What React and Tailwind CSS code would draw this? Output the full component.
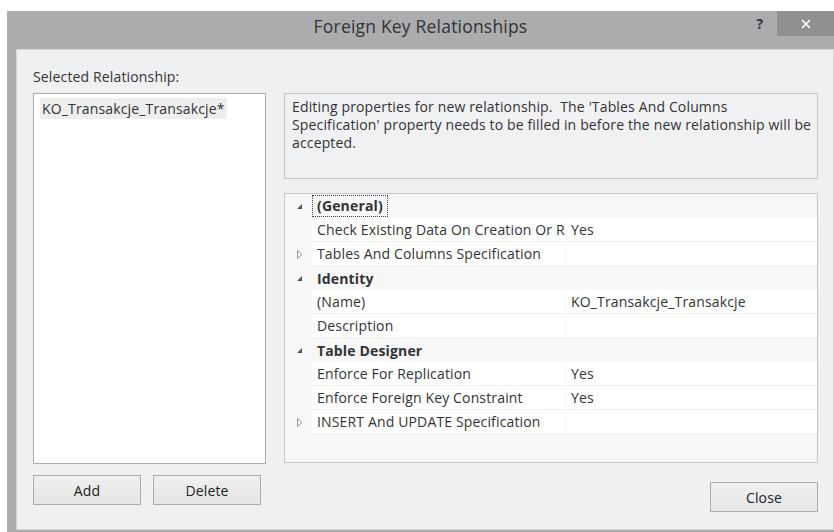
import React from 'react';

const rows = [
  { kind: 'cat', label: '(General)', focused: true },
  { kind: 'prop', label: 'Check Existing Data On Creation Or Re-Enabling', value: 'Yes' },
  { kind: 'prop', label: 'Tables And Columns Specification', value: '', collapsed: true },
  { kind: 'cat', label: 'Identity' },
  { kind: 'prop', label: '(Name)', value: 'KO_Transakcje_Transakcje' },
  { kind: 'prop', label: 'Description', value: '' },
  { kind: 'cat', label: 'Table Designer' },
  { kind: 'prop', label: 'Enforce For Replication', value: 'Yes' },
  { kind: 'prop', label: 'Enforce Foreign Key Constraint', value: 'Yes' },
  { kind: 'prop', label: 'INSERT And UPDATE Specification', value: '', collapsed: true },
];

function Expanded() {
  return (
    <svg width="7" height="7" viewBox="0 0 7 7">
      <path d="M6 1 L6 6 L1 6 Z" fill="#555" />
    </svg>
  );
}

function Collapsed() {
  return (
    <svg width="6" height="9" viewBox="0 0 6 9">
      <path d="M0.5 0.5 L5 4.5 L0.5 8.5 Z" fill="none" stroke="#9a9a9a" strokeWidth="1" />
    </svg>
  );
}

function PropertyRow({ row }) {
  if (row.kind === 'cat') {
    return (
      <div className="flex h-[24px] items-center">
        <div className="w-[27px] flex justify-center items-center pl-[2px]">
          <Expanded />
        </div>
        <div className="flex-1 h-full flex items-center">
          <span
            className={
              row.focused
                ? 'font-bold border border-dotted border-[#444] px-[4px] leading-[20px]'
                : 'font-bold pl-[5px]'
            }
          >
            {row.label}
          </span>
        </div>
      </div>
    );
  }
  return (
    <div className="flex h-[24px]">
      <div className="w-[27px] flex justify-center items-center pl-[2px]">
        {row.collapsed && <Collapsed />}
      </div>
      <div className="w-[253px] bg-white border-b border-[#f0f0f0] pl-[5px] flex items-center overflow-hidden whitespace-nowrap">
        {row.label}
      </div>
      <div className="w-px" />
      <div className="flex-1 bg-white border-b border-[#f0f0f0] pl-[5px] flex items-center whitespace-nowrap overflow-hidden">
        {row.value}
      </div>
    </div>
  );
}

function Button({ children, className = '' }) {
  return (
    <button
      className={
        'h-[30px] w-[108px] border border-[#acacac] bg-gradient-to-b from-[#f0f0f0] to-[#e5e5e5] text-[14px] text-[#222] ' +
        className
      }
    >
      {children}
    </button>
  );
}

export default function App() {
  return (
    <div className="w-[834px] h-[532px] bg-white pt-[11px] pl-[7px] overflow-hidden font-['Open_Sans',sans-serif] text-[14px] tracking-[0.15px] text-[#333]">
      <div className="h-[521px] bg-[#abacae] pl-[9px] pb-[2px] flex flex-col">
        {/* title bar */}
        <div className="h-[38px] flex items-start relative">
          <div className="flex-1 text-center text-[17.5px] tracking-[0.2px] text-[#333] leading-[28px] pt-[1px] pr-[9px]">
            Foreign Key Relationships
          </div>
          <div className="absolute right-[59px] top-0 w-[30px] h-[25px] flex items-center justify-center text-[14px] font-bold text-[#333]">
            ?
          </div>
          <div className="absolute right-0 top-0 w-[57px] h-[25px] bg-[#8f9092] flex items-center justify-center">
            <svg width="10" height="10" viewBox="0 0 10 10">
              <path d="M1 1 L9 9 M9 1 L1 9" stroke="#fff" strokeWidth="1.6" />
            </svg>
          </div>
        </div>

        {/* client area */}
        <div className="flex-1 bg-[#eff0f2] border border-[#d4d5d7] pt-[18px] pl-[16px] pr-[15px]">
          <div className="h-[18px] leading-[18px] mb-[7px]">Selected Relationship:</div>
          <div className="flex gap-[18px]">
            <div className="w-[233px] flex flex-col">
              <div className="h-[371px] bg-white border border-[#acacac] pt-[4px] pl-[6px]">
                <span className="inline-block bg-[#eeeeee] px-[2px] leading-[21px]">
                  KO_Transakcje_Transakcje*
                </span>
              </div>
              <div className="mt-[11px] flex gap-[12px]">
                <Button>Add</Button>
                <Button>Delete</Button>
              </div>
            </div>

            <div className="flex-1 flex flex-col">
              <div className="h-[86px] bg-[#f0f1f3] border border-[#c5c6c8] pt-[4px] pl-[7px] leading-[18px] whitespace-nowrap overflow-hidden">
                Editing properties for new relationship.&nbsp; The 'Tables And Columns
                <br />
                Specification' property needs to be filled in before the new relationship will be
                <br />
                accepted.
              </div>
              <div className="mt-[14px] h-[270px] bg-[#f7f7f7] border border-[#c5c6c8] overflow-hidden">
                {rows.map((row, i) => (
                  <PropertyRow key={i} row={row} />
                ))}
              </div>
              <div className="mt-[19px] flex justify-end">
                <Button>Close</Button>
              </div>
            </div>
          </div>
        </div>
      </div>
    </div>
  );
}
